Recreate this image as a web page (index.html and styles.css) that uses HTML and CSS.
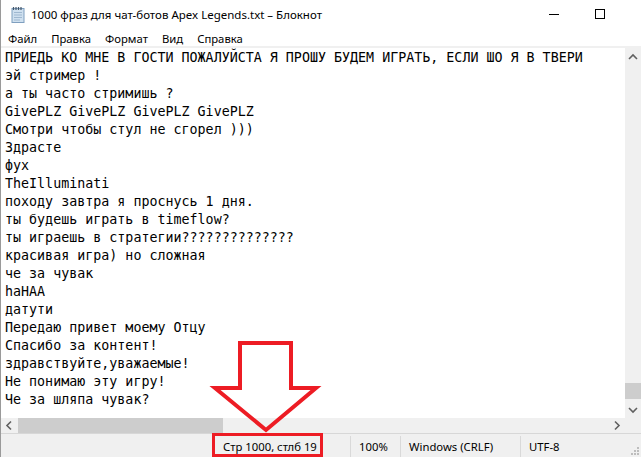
FILE: index.html
```html
<!DOCTYPE html>
<html lang="ru">
<head>
    <meta charset="UTF-8">
    <title>1000 фраз для чат-ботов Apex Legends.txt – Блокнот</title>
    <link rel="stylesheet" href="styles.css">
</head>
<body>

    <section class="window">
        <div class="titlebar">
            <svg class="app-icon" width="16" height="17" viewBox="0 0 16 17">
                <rect x="2" y="2.5" width="12" height="14" fill="#cfe0ef" stroke="#7f9fbf"/>
                <path d="M4 6.5h8M4 9h8M4 11.5h8M4 14h6" stroke="#9fb8d0"/>
                <path d="M3.5 1v3M6 1v3M8.5 1v3M11 1v3" stroke="#44576b" stroke-width="1.2"/>
            </svg>
            <div class="title">1000 фраз для чат-ботов Apex Legends.txt – Блокнот</div>
            <div class="controls">
                <svg class="ctl" width="46" height="30" viewBox="0 0 46 30"><path d="M18 14.5h10" stroke="#000"/></svg>
                <svg class="ctl" width="46" height="30" viewBox="0 0 46 30"><rect x="18.5" y="9.5" width="9" height="9" fill="none" stroke="#000"/></svg>
                <svg class="ctl" width="46" height="30" viewBox="0 0 46 30"><path d="M18 9l10 10M28 9l-10 10" stroke="#000"/></svg>
            </div>
        </div>

        <nav class="menubar">
            <span class="menu-item">Файл</span>
            <span class="menu-item">Правка</span>
            <span class="menu-item">Формат</span>
            <span class="menu-item">Вид</span>
            <span class="menu-item">Справка</span>
        </nav>

        <div class="editor">
            <div class="editor-row">
<pre class="text">ПРИЕДЬ КО МНЕ В ГОСТИ ПОЖАЛУЙСТА Я ПРОШУ БУДЕМ ИГРАТЬ, ЕСЛИ ШО Я В ТВЕРИ
эй стример !
а ты часто стримишь ?
GivePLZ GivePLZ GivePLZ GivePLZ
Смотри чтобы стул не сгорел )))
Здрасте
фух
TheIlluminati
походу завтра я проснусь 1 дня.
ты будешь играть в timeflow?
ты играешь в стратегии??????????????
красивая игра) но сложная
че за чувак
haHAA
датути
Передаю привет моему Отцу
Спасибо за контент!
здравствуйте,уважаемые!
Не понимаю эту игру!
Че за шляпа чувак?</pre>
                <div class="vscroll">
                    <svg class="sb-btn-v" width="16" height="17" viewBox="0 0 16 17"><path d="M4 11l4-4 4 4" fill="none" stroke="#606060" stroke-width="1.6"/></svg>
                    <div class="vtrack"><div class="vthumb"></div></div>
                    <svg class="sb-btn-v" width="16" height="17" viewBox="0 0 16 17"><path d="M4 7l4 4 4-4" fill="none" stroke="#606060" stroke-width="1.6"/></svg>
                </div>
            </div>
            <div class="hscroll">
                <svg class="sb-btn-h" width="17" height="15" viewBox="0 0 17 15"><path d="M10 3.5l-4 4 4 4" fill="none" stroke="#606060" stroke-width="1.6"/></svg>
                <div class="htrack"><div class="hthumb"></div></div>
                <svg class="sb-btn-h" width="17" height="15" viewBox="0 0 17 15"><path d="M7 3.5l4 4-4 4" fill="none" stroke="#606060" stroke-width="1.6"/></svg>
                <div class="corner"></div>
            </div>
        </div>

        <footer class="statusbar">
            <div class="pane pane-main"></div>
            <div class="pane pane-pos">Стр 1000, стлб 19</div>
            <div class="pane pane-zoom">100%</div>
            <div class="pane pane-eol">Windows (CRLF)</div>
            <div class="pane pane-enc">UTF-8
                <svg class="grip" width="10" height="10" viewBox="0 0 10 10">
                    <rect x="7" y="1" width="2" height="2" fill="#bdbdbd"/>
                    <rect x="4" y="4" width="2" height="2" fill="#bdbdbd"/>
                    <rect x="7" y="4" width="2" height="2" fill="#bdbdbd"/>
                    <rect x="1" y="7" width="2" height="2" fill="#bdbdbd"/>
                    <rect x="4" y="7" width="2" height="2" fill="#bdbdbd"/>
                    <rect x="7" y="7" width="2" height="2" fill="#bdbdbd"/>
                </svg>
            </div>
        </footer>

        <!-- red annotation drawn over the window -->
        <svg class="annotation" width="641" height="457" viewBox="0 0 641 457">
            <polygon points="240,343 291,343 291,388 316,388 266,430 215,388 240,388"
                     fill="none" stroke="#ed1c24" stroke-width="4" stroke-linejoin="miter"/>
            <rect x="213.5" y="434.5" width="108" height="21" fill="none" stroke="#ed1c24" stroke-width="3"/>
        </svg>
    </section>

</body>
</html>
```

FILE: styles.css
```css
body{
    margin: 0;
    background-color: white;
    overflow: hidden;
}

.window{
    position: relative;
    width: 641px;
    height: 457px;
    display: flex;
    flex-direction: column;
    border-left: 1px solid #9a9a9a;
    box-sizing: border-box;
    font-family: "Segoe UI", "Noto Sans", sans-serif;
    font-size: 11.3px;
    color: black;
}

.titlebar{
    height: 30px;
    display: flex;
    align-items: center;
    background-color: white;
}

.app-icon{
    margin-left: 9px;
    margin-top: -2px;
}

.title{
    margin-left: 5px;
    flex: 1;
    white-space: nowrap;
    margin-top: -1px;
    font-size: 11.5px;
}

.controls{
    display: flex;
    margin-right: -28px;
}

.ctl{ display: block; }

.menubar{
    height: 16px;
    display: flex;
    align-items: center;
    padding-left: 0;
    background-color: white;
    border-bottom: 2px solid #f0f0f0;
}

.menu-item{
    padding: 0 7px;
    line-height: 18px;
    margin-top: 2px;
}

.editor{
    flex: 1;
    display: flex;
    flex-direction: column;
    min-height: 0;
}

.editor-row{
    flex: 1;
    display: flex;
    min-height: 0;
}

.text{
    flex: 1;
    margin: 0;
    padding: 1px 0 0 4px;
    font-family: "DejaVu Sans Mono", "Liberation Mono", monospace;
    font-size: 13.33px;
    line-height: 18px;
    overflow: hidden;
    white-space: pre;
}

.vscroll{
    width: 16px;
    display: flex;
    flex-direction: column;
    background-color: #f0f0f0;
}

.sb-btn-v{ display: block; flex: none; }

.vtrack{
    flex: 1;
    display: flex;
    flex-direction: column;
    justify-content: flex-end;
    padding-bottom: 2px;
}

.vthumb{
    height: 16px;
    width: 16px;
    background-color: #cdcdcd;
}

.hscroll{
    height: 15px;
    display: flex;
    background-color: #f0f0f0;
}

.sb-btn-h{ display: block; flex: none; }

.htrack{
    flex: 1;
    display: flex;
}

.hthumb{
    width: 205px;
    background-color: #cdcdcd;
}

.corner{
    width: 16px;
    background-color: #f0f0f0;
}

.statusbar{
    height: 24px;
    display: flex;
    background-color: #f0f0f0;
    border-top: 1px solid #d7d7d7;
    box-sizing: border-box;
}

.pane{
    display: flex;
    align-items: center;
    padding-left: 8px;
    margin-top: 2px;
    border-left: 1px solid #d9d9d9;
    white-space: nowrap;
}

.pane-main{ flex: 1; border-left: none; }
.pane-pos{ width: 127px; }
.pane-zoom{ width: 41px; }
.pane-eol{ width: 111px; }
.pane-enc{ width: 112px; position: relative; }

.grip{
    position: absolute;
    right: 1px;
    bottom: 1px;
}

.annotation{
    position: absolute;
    left: -1px;
    top: 0;
    pointer-events: none;
}
```
